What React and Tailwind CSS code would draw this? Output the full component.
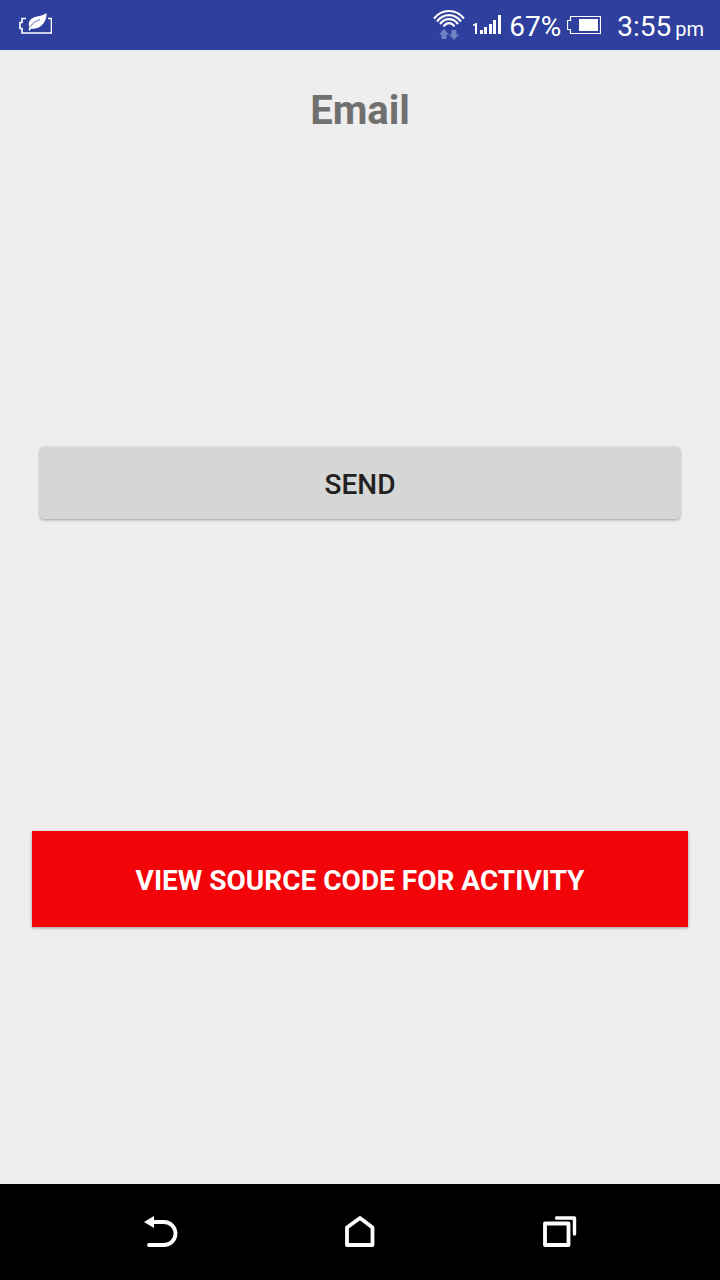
import React from 'react';

const LeafBatteryIcon = () => (
  <svg width="36" height="24" viewBox="0 0 36 24" fill="none" aria-hidden="true">
    <path d="M10 5.500H6v4H4v6h2v4.500h29.500V5.500H32" stroke="white" strokeWidth="1.600" />
    <path
      d="M13.500 14.500C11 8 15.500 4.500 21 3.500C25 2.800 28 2 30.500 0C31 5 28.500 10 25 13C22 15.500 18 16 15.500 15.500C14 16.500 14.500 17.300 13.500 17.800C12.300 17 12.300 16 13.500 14.500Z"
      fill="white"
    />
    <path d="M14.500 13.500C16.500 10 20 8 24 6.500" stroke="#2e3f9d" strokeWidth="0.800" />
  </svg>
);

const WifiIcon = () => (
  <svg width="32" height="32" viewBox="0 0 32 32" fill="none" aria-hidden="true">
    <g stroke="white" strokeWidth="2.100">
      <path d="M1 9.500C9 -0.500 23 -0.500 31 9.500" />
      <path d="M4 12.500C10.500 4 21.500 4 28 12.500" />
      <path d="M7 15C12 8.500 20 8.500 25 15" />
      <path d="M10.500 17.500C13.500 13 18.500 13 21.500 17.500" />
    </g>
    <path d="M11 20l5 5.500h-2.500V30h-5v-4.500H6z" fill="#7080c4" />
    <path d="M21 31l-5-5.500h2.500V21h5v4.500H26z" fill="#7080c4" />
  </svg>
);

const SignalIcon = () => (
  <svg width="28" height="20" viewBox="0 0 28 20" fill="white" aria-hidden="true">
    <path d="M0 9.500L3 8h1v11H2v-8.500L0 11z" />
    <path d="M7 15h3v4H7zM11 12h3v7h-3zM16 9h3v10h-3zM20 5h3v14h-3zM25 0h3v19h-3z" />
  </svg>
);

const BatteryIcon = () => (
  <svg width="34" height="20" viewBox="0 0 34 20" fill="none" aria-hidden="true">
    <path d="M3.500 1.500h30v17h-30v-4h-3v-9h3z" stroke="white" strokeWidth="1.200" />
    <path d="M12 4h19v12H12z" fill="white" />
  </svg>
);

const BackIcon = () => (
  <svg width="36" height="36" viewBox="0 0 36 36" fill="none" aria-hidden="true">
    <path d="M10 8h12a11.500 11.500 0 0 1 0 23H7" stroke="white" strokeWidth="3.800" strokeLinecap="round" />
    <path d="M2 8l10-6v12z" fill="white" />
  </svg>
);

const HomeIcon = () => (
  <svg width="36" height="36" viewBox="0 0 36 36" fill="none" aria-hidden="true">
    <path d="M5 13.500L18 4l12.500 9.500V31H5z" stroke="white" strokeWidth="3.800" strokeLinejoin="round" />
  </svg>
);

const RecentIcon = () => (
  <svg width="36" height="36" viewBox="0 0 36 36" fill="none" aria-hidden="true">
    <path d="M3 9.500h23.500V31H3z" stroke="white" strokeWidth="3.800" strokeLinejoin="round" />
    <path d="M14.500 4H32.500V20" stroke="white" strokeWidth="3.400" strokeLinecap="round" strokeLinejoin="round" />
  </svg>
);

const StatusBar = () => (
  <header className="flex h-[50px] items-center justify-between bg-[#2e3f9d] px-4 text-white">
    <LeafBatteryIcon />
    <div className="flex items-center">
      <WifiIcon />
      <div className="ml-2">
        <SignalIcon />
      </div>
      <span className="ml-2 pt-1 text-[28px]">67%</span>
      <div className="ml-1.5">
        <BatteryIcon />
      </div>
      <span className="ml-4 pt-1 text-[28px]">
        3:55<span className="ml-1 text-xl">pm</span>
      </span>
    </div>
  </header>
);

const NavBar = () => (
  <nav className="flex h-24 items-center justify-center gap-[164px] bg-black">
    <button type="button" aria-label="Back">
      <BackIcon />
    </button>
    <button type="button" aria-label="Home">
      <HomeIcon />
    </button>
    <button type="button" aria-label="Recent apps">
      <RecentIcon />
    </button>
  </nav>
);

const App = () => {
  return (
    <div className="flex min-h-screen flex-col bg-[#eeeeee] font-['Roboto',sans-serif]">
      <StatusBar />

      <main className="flex flex-1 flex-col px-8 pt-8">
        <h1 className="text-center text-[40px] leading-[58px] font-bold text-[#707070]">Email</h1>

        <div className="mt-[307px] px-2">
          <button
            type="button"
            className="h-18 w-full rounded-sm bg-[#d5d7d6] pt-1 text-[28px] font-medium text-[#212121] shadow-[0_1px_3px_rgba(0,0,0,0.35)]"
          >
            SEND
          </button>
        </div>

        <button
          type="button"
          className="mt-[312px] h-24 w-full bg-[#f20408] pt-1 text-[28px] font-bold text-white shadow-[0_1px_3px_rgba(0,0,0,0.35)]"
        >
          VIEW SOURCE CODE FOR ACTIVITY
        </button>
      </main>

      <NavBar />
    </div>
  );
};

export default App;
